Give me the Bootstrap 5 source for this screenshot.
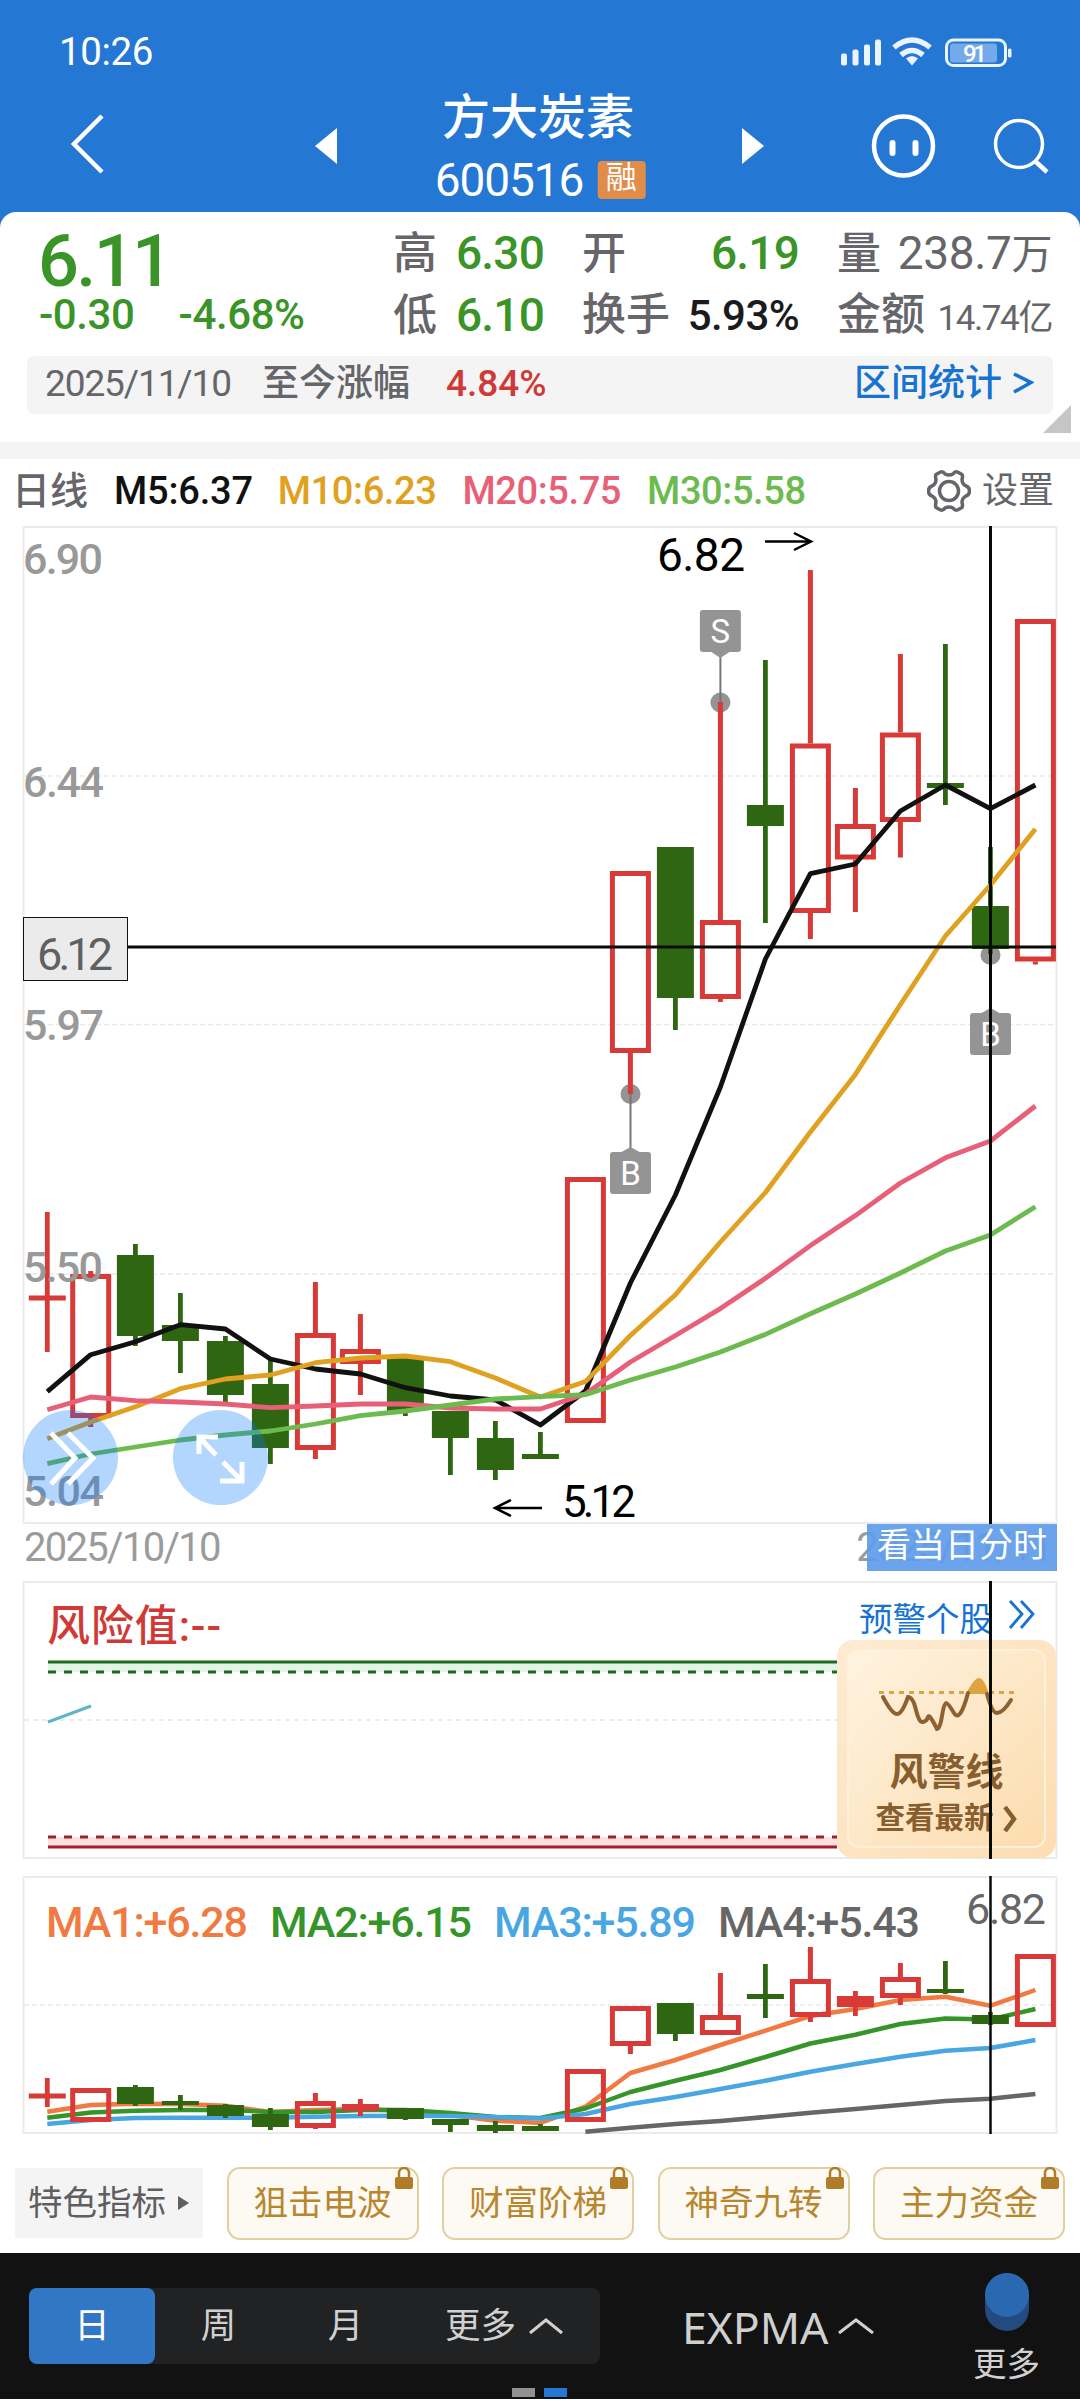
<!DOCTYPE html>
<html lang="zh-CN">
<head>
<meta charset="utf-8">
<meta name="viewport" content="width=1080">
<title>方大炭素 600516</title>
<link href="https://cdn.jsdelivr.net/npm/bootstrap@5.3.0/dist/css/bootstrap.min.css" rel="stylesheet">
<style>
body{width:1080px;height:2400px;overflow:hidden;background:#fff;font-family:Roboto,"Noto Sans CJK SC",sans-serif;line-height:1;color:#66666a}
svg{display:block;flex:none}
.topbar{height:228px;background:#2577d4;color:#fff}
.statusline{height:100px;padding:4px 68px 0 59px;font-size:38.5px}
.titleline{height:112px;position:relative;padding:0 31px 0 70px}
.stock-name{font-size:48px;font-weight:500;line-height:56px;padding-top:4px;height:56px;margin-left:-4px}
.stock-code{font-size:46px;letter-spacing:-1.1px;line-height:44px}
.rong{width:48px;height:38px;background:#e18c49;border-radius:4px;font-size:31px;line-height:34px;text-align:center;margin-left:14px;margin-top:-1px}
.quote-box{height:230px;margin-top:-16px;background:#fff;border-radius:16px 16px 0 0;position:relative;padding:12px 27px 0}
.up{color:#cf3a36}.down{color:#3a9428}.link-blue{color:#1673d2}
.quote-grid{display:grid;grid-template-columns:366px 151px 255px 212px;height:124px}
.price{font-size:72px;font-weight:500;letter-spacing:-2.6px;line-height:72px;height:67px;padding:2px 0 0 11px}
.delta{font-size:42px;font-weight:500;padding-left:12px;line-height:48px;gap:44px;letter-spacing:-.4px}
.pair{display:flex;justify-content:space-between;align-items:baseline;height:62px;line-height:58px;font-size:44px;white-space:nowrap}
.pair>span:first-child{font-weight:500}
.num{font-size:46px;font-weight:500;letter-spacing:-.8px}
.vol{padding-left:38px;margin-right:-41px}
.since{height:58px;background:#f4f4f4;border-radius:7px;font-size:37px;padding:0 19px 4px 18px;margin-top:8px;white-space:nowrap}
.fold{position:absolute;right:9px;bottom:9px}
.strip{height:17px;background:#f3f3f3}
.legend-row{height:67px;padding:0 26px 3px 12px;font-size:38px;font-weight:500;white-space:nowrap}
.date-row{height:57px;position:relative;padding:0 28px 0 24px;font-size:40px;color:#9b9b9d;letter-spacing:-1.7px;line-height:48px}
.intraday{position:absolute;left:867px;top:0;width:190px;height:47px;background:rgba(94,156,236,.92);color:#fff;font-size:34px;line-height:43px;text-align:center;letter-spacing:0}
.overlay-host{position:relative}
.round-btn{position:absolute;top:884px;width:95px;height:95px;border-radius:50%;background:rgba(2,118,252,.3)}
.warn-card{position:absolute;left:837px;top:59px;width:219px;height:218px;border-radius:16px;background:linear-gradient(135deg,#fdebd2,#fdddb2);padding:9px 10px}
.warn-inner{height:199px;border:2px solid #fff0d9;border-radius:12px;background:linear-gradient(135deg,#fff3e1,#fcdcae);color:#895e2f;font-weight:700;text-align:center;padding-top:23px}
.crossline{position:absolute;left:989px;top:0;width:3px;background:#080a08}
.chips{height:119px;padding:33px 15px 0;white-space:nowrap}
.chip-plain{width:188px;height:70px;margin-top:1px;background:#f4f4f4;font-size:34.5px;color:#5f5f61;padding-left:13px;line-height:68px}
.chip-lock{position:relative;width:192px;height:73px;border:2px solid #e2cf9f;border-radius:13px;background:#fdfaf3;color:#b8862f;font-size:34.5px;line-height:68px;text-align:center}
.chip-lock svg{position:absolute;right:4px;top:-2px}
.dock{height:146px;background:#121212;color:#d0d0d0;position:relative;padding:35px 40px 0 29px}
.seg{width:571px;height:76px;background:#212223;border-radius:8px;font-size:35.5px}
.seg>div{height:76px;line-height:76px;text-align:center;width:127px}
.seg>.on{width:126px;background:#3276c6;border-radius:8px;color:#fff}
.pager{position:absolute;left:512px;bottom:2px;gap:9px}
.pager i{width:23px;height:9px;background:#929292}
svg text{font-family:Roboto,"Noto Sans CJK SC",sans-serif}
</style>
<script src="https://cdn.jsdelivr.net/npm/bootstrap@5.3.0/dist/js/bootstrap.bundle.min.js"></script>
</head>
<body>
<header class="topbar">
  <div class="statusline d-flex align-items-center justify-content-between">
    <span style="letter-spacing:-.4px">10:26</span>
    <svg width="171" height="30" viewBox="842 36.500 171 30" fill="#e9f4ff">
      <rect x="842" y="53" width="6" height="12" rx="2"/><rect x="853.500" y="49" width="6" height="16" rx="2"/><rect x="865" y="44" width="6" height="21" rx="2"/><rect x="876" y="39" width="6" height="26" rx="2"/>
      <path d="M913 65l-6-7q6-5 12 0z"/>
      <g fill="none" stroke="#e9f4ff" stroke-width="5.500"><path d="M895 47q18-15 36 0"/><path d="M902 54.500q11-9 22 0"/></g>
      <rect x="947.500" y="39.500" width="59" height="25.500" rx="7" fill="none" stroke="#e9f4ff" stroke-width="3"/>
      <rect x="951" y="43" width="47" height="19" rx="3" fill="#75aaea"/><rect x="1009" y="48" width="3.500" height="9" rx="1.500"/>
      <text x="964" y="61" font-size="24" font-weight="500" textLength="24" fill="#fff">91</text>
    </svg>
  </div>
  <div class="titleline">
    <svg width="980" height="90" viewBox="70 100 980 90" fill="none" stroke="#fff">
      <path d="M102 116L74 144l28 28" stroke-width="4.500"/>
      <path d="M337 128v36l-22-18zM742 128v36l22-18z" fill="#fff" stroke="none"/>
      <circle cx="903.500" cy="146" r="29.500" stroke-width="4.500"/>
      <path d="M892.500 143v10M915.500 143v10" stroke-width="6" stroke-linecap="round"/>
      <circle cx="1019" cy="144" r="23.500" stroke-width="3.500"/><path d="M1035 161l12 11" stroke-width="4.500"/>
    </svg>
    <div class="position-absolute top-0 start-50 translate-middle-x text-center" style="margin-top:-14px">
      <div class="stock-name">方大炭素</div>
      <div class="d-flex align-items-center mt-3"><span class="stock-code">600516</span><span class="rong">融</span></div>
    </div>
  </div>
</header>

<section class="quote-box">
  <div class="quote-grid">
    <div class="down"><div class="price">6.11</div><div class="delta d-flex"><span>-0.30</span><span>-4.68%</span></div></div>
    <div><div class="pair"><span>高</span><span class="num down">6.30</span></div><div class="pair"><span>低</span><span class="num down">6.10</span></div></div>
    <div style="padding-left:38px"><div class="pair"><span>开</span><span class="num down">6.19</span></div><div class="pair"><span>换手</span><span style="color:#1b1b1d;font-size:42px;font-weight:500;letter-spacing:-.6px">5.93%</span></div></div>
    <div><div class="pair vol"><span>量</span><span style="font-size:41px;letter-spacing:-.4px"><span style="font-size:46px">238.7</span>万</span></div><div class="pair vol"><span>金额</span><span style="font-size:35px;letter-spacing:-1.400px">14.74亿</span></div></div>
  </div>
  <div class="since d-flex align-items-center">
    <span style="letter-spacing:-1.100px">2025/11/10</span><span class="fw-medium" style="margin-left:31px">至今涨幅</span><span class="up fw-medium" style="margin-left:36px">4.84%</span>
    <span class="link-blue fw-medium ms-auto">区间统计</span>
    <svg style="margin-left:10px" width="22" height="26" fill="none" stroke="#1673d2" stroke-width="3.500"><path d="M2 4l17 8.500L2 22"/></svg>
  </div>
  <svg class="fold" width="28" height="28"><path d="M28 0v28H0z" fill="#c6c6c6"/></svg>
</section>
<div class="strip"></div>

<div class="legend-row d-flex align-items-center">
  <span>日线</span>
  <span style="color:#111;margin-left:26px;letter-spacing:-.2px">M5:6.37</span>
  <span style="color:#e0a020;margin-left:25px;letter-spacing:-.4px">M10:6.23</span>
  <span style="color:#e85f78;margin-left:26px;letter-spacing:-.4px">M20:5.75</span>
  <span style="color:#6dbb4f;margin-left:26px;letter-spacing:-.4px">M30:5.58</span>
  <svg class="ms-auto" width="44" height="44" viewBox="-22 -22 44 44" fill="none" stroke="#66666a" stroke-width="3.500" stroke-linejoin="round"><path d="M-8.500-19Q-6-20-4-17Q0-15 4-17Q6-20 8.500-19L13-16.500Q14-15 13-11.500Q13-7 17-5Q20.500-4 20.500 0Q20.500 4 17 5Q13 7 13 11.500Q14 15 13 16.500L8.500 19Q6 20 4 17Q0 15-4 17Q-6 20-8.500 19L-13 16.500Q-14 15-13 11.500Q-13 7-17 5Q-20.500 4-20.500 0Q-20.500-4-17-5Q-13-7-13-11.500Q-14-15-13-16.500z"/><circle r="9.500"/></svg>
  <span style="font-size:36px;font-weight:400;margin-left:11px">设置</span>
</div>

<div class="overlay-host">
  <svg id="kline" width="1080" height="998" viewBox="0 526 1080 998"></svg>
  <div class="round-btn" style="left:23px"><svg width="95" height="95" fill="none" stroke="#fff" stroke-width="5"><path d="M28 23L52 48 28 74M45 23L70 48 45 74"/></svg></div>
  <div class="round-btn" style="left:173px"><svg width="95" height="95" fill="none" stroke="#fff" stroke-width="5"><path d="M45 27H26V44M26 27L43 45M50 52L69 71M47 71H69V52"/></svg></div>
</div>
<div class="date-row d-flex justify-content-between"><span>2025/10/10</span><span>2025/11/11</span><span class="intraday">看当日分时</span></div>

<div class="overlay-host" style="height:295px">
  <svg width="1080" height="278" viewBox="0 1581 1080 278">
    <rect x="23.500" y="1582" width="1033" height="276" fill="none" stroke="#ebebeb" stroke-width="2"/>
    <path d="M24 1720H837" stroke="#e6e6e6" stroke-width="1.500" stroke-dasharray="5 4"/>
    <path fill="#e3f3e5" d="M48 1662h789v10H48z"/><path fill="#fcdfe0" d="M48 1837h789v10H48z"/>
    <g fill="none" stroke-width="3"><path d="M48 1662H837" stroke="#1d6b20"/><path d="M48 1672H837" stroke="#1d6b20" stroke-dasharray="8 8"/><path d="M48 1837H837" stroke="#a51d28" stroke-dasharray="8 8"/><path d="M48 1847H837" stroke="#a51d28"/></g>
    <path d="M48 1722L91 1706" stroke="#62b5c9" stroke-width="3"/>
    <text x="47" y="1641" font-size="43" font-weight="500" fill="#cf3a36" textLength="174">风险值:--</text>
    <text x="859" y="1631" font-size="33.500" fill="#1673d2">预警个股</text>
    <path d="M1010 1601l12 13-12 14M1021 1601l12 13-12 14" fill="none" stroke="#1673d2" stroke-width="2.800"/>
  </svg>
  <div class="warn-card"><div class="warn-inner">
    <svg class="mx-auto" width="140" height="60" viewBox="877 1674 140 60" fill="none">
      <path d="M966 1694q8-16 13-16t10 16z" fill="#dfa440"/><path d="M879 1692.500H1015" stroke="#dfa440" stroke-width="3" stroke-dasharray="5 5"/>
      <path d="M883 1697q9 17 14 17t11-17q5 0 8 13t7 12 5-5 9 12q3 0 5-13t4-13 8 10 14-20M987 1694q5 19 10 19 6 0 14-13" stroke="#8d6230" stroke-width="4" stroke-linecap="round"/>
    </svg>
    <div style="font-size:38px;line-height:42px;margin-top:17px">风警线</div>
    <div class="d-flex justify-content-center align-items-center" style="font-size:29.500px;line-height:40px;margin-top:5px">查看最新<svg style="margin-left:8px" width="16" height="28" fill="none" stroke="#895e2f" stroke-width="4.500"><path d="M3 3l9 12-9 12"/></svg></div>
  </div></div>
  <div class="crossline" style="height:278px"></div>
</div>

<svg id="expma" width="1080" height="258" viewBox="0 1876 1080 258"></svg>

<div class="chips d-flex justify-content-between">
  <div class="chip-plain d-flex align-items-center"><span>特色指标</span><svg width="11" height="14" style="margin-left:12px" fill="#5f5f61"><path d="M0 0l11 7-11 7z"/></svg></div>
  <div class="chip-lock">狙击电波<svg width="18" height="23"><path d="M4 11V6a5 5 0 0 1 10 0v5" fill="none" stroke="#b17c27" stroke-width="2.500"/><rect y="10" width="18" height="12" rx="2" fill="#b17c27"/></svg></div>
  <div class="chip-lock">财富阶梯<svg width="18" height="23"><path d="M4 11V6a5 5 0 0 1 10 0v5" fill="none" stroke="#b17c27" stroke-width="2.500"/><rect y="10" width="18" height="12" rx="2" fill="#b17c27"/></svg></div>
  <div class="chip-lock">神奇九转<svg width="18" height="23"><path d="M4 11V6a5 5 0 0 1 10 0v5" fill="none" stroke="#b17c27" stroke-width="2.500"/><rect y="10" width="18" height="12" rx="2" fill="#b17c27"/></svg></div>
  <div class="chip-lock">主力资金<svg width="18" height="23"><path d="M4 11V6a5 5 0 0 1 10 0v5" fill="none" stroke="#b17c27" stroke-width="2.500"/><rect y="10" width="18" height="12" rx="2" fill="#b17c27"/></svg></div>
</div>

<nav class="dock d-flex">
  <div class="seg d-flex"><div class="on">日</div><div>周</div><div>月</div>
    <div class="d-flex align-items-center justify-content-center" style="width:191px;padding-right:0">更多<svg style="margin-left:12px" width="36" height="18" fill="none" stroke="#d0d0d0" stroke-width="3"><path d="M2 16L18 3l16 13"/></svg></div></div>
  <div class="d-flex align-items-center" style="height:76px;margin-left:82px;font:44.500px 'Noto Sans',sans-serif">EXPMA<svg style="margin-left:8px" width="38" height="18" fill="none" stroke="#d0d0d0" stroke-width="3"><path d="M2 16L19 3l17 13"/></svg></div>
  <div class="ms-auto text-center" style="margin-top:-15px;font-size:33.500px">
    <svg class="mx-auto" width="44" height="58"><path d="M0 22a22 22 0 0 1 44 0v14a22 22 0 0 1-44 0z" fill="#234b7f"/><circle cx="22" cy="22" r="22" fill="#2b68b2"/></svg>
    <div style="margin-top:17px">更多</div>
  </div>
  <div class="pager d-flex"><i></i><i style="background:#2577d4"></i></div>
</nav>

<script>
const RED='#d83a38', GREEN='#2f6612';
const cx=i=>i===0?47.3:i===1?90.7:45.4+45*i;
/* [up?, body top, body bottom, wick top, wick bottom] in panel coordinates */
const day=[[1,1295.5,1300.5,1212,1352],[1,1274,1418,1271,1427],[0,1255,1336,1244,1346],[0,1325,1341,1293,1373],[0,1341,1395,1336,1402],[0,1384,1448,1360,1464],[1,1333,1450,1282,1459],[1,1349,1364,1314,1395],[0,1357,1411,1357,1416],[0,1411,1438,1411,1475],[0,1438,1470,1421,1480],[0,1454,1459,1432,1459],[1,1177,1423,1177,1423],[1,871,1053,871,1094],[0,847,998,847,1030],[1,920,999,702,1002],[0,805,826,660,923],[1,743.5,913,570,939],[1,824,859.5,788,912],[1,732.5,822,654,857.5],[0,783,788,644,805],[0,906,949,847,954],[1,619,961.5,619,964.5]];
const mini=[[1,2093.5,2098.5,2078,2107],[1,2088,2122,2088,2122],[0,2087,2104,2085,2106],[0,2101,2105,2095,2110],[0,2105,2116,2104,2118],[0,2114,2127,2108,2130],[1,2101,2128,2093,2129],[1,2104,2111,2099,2116],[0,2108,2119,2108,2120],[0,2119,2125,2119,2132],[0,2125,2131,2121,2133],[0,2126,2131,2124,2131],[1,2069,2122,2069,2122],[1,2006,2046,2006,2054],[0,2003,2034,2003,2041],[1,2015,2035,1973,2035],[0,1994,1999,1964,2018],[1,1979,2017,1947,2022],[1,1996,2007,1991,2016],[1,1977,1998,1963,2005],[0,1989,1993,1961,1994],[0,2015,2024,2012,2025],[1,1954,2027,1954,2027]];
const candle=([up,t,b,wt,wb],i)=>{
  const x=cx(i), c=up?RED:GREEN;
  if(up && b-t>14) return `<g stroke="${c}" stroke-width="5" fill="none"><rect x="${x-18}" y="${t+2.5}" width="36" height="${b-t-5}"/><path d="M${x} ${wt}V${t}M${x} ${b}V${wb}"/></g>`;
  return `<path fill="${c}" d="M${x-18.5} ${t}h37V${b}h-37z"/><path stroke="${c}" stroke-width="4.800" d="M${x} ${wt}V${wb}"/>`;
};
const line=(v,c,w,s=0)=>`<polyline fill="none" stroke="${c}" stroke-width="${w}" stroke-linejoin="round" points="${v.map((y,i)=>cx(i+s)+','+y).join(' ')}"/>`;
const grid=y=>`<path d="M24 ${y}H1056" stroke="#e9e9e9" stroke-width="1.500" stroke-dasharray="5 3"/>`;
const label=(x,y,s,n,w,c,fw=400)=>`<text x="${x}" y="${y}" font-size="${n}" textLength="${w}" fill="${c}" font-weight="${fw}">${s}</text>`;
const tag=(x,top,ch,down)=>`<rect x="${x-20.5}" y="${top}" width="41" height="42" rx="3" fill="#949494"/><path fill="#949494" d="${down?`M${x-9} ${top+42}h18l-9 6z`:`M${x-9} ${top}h18l-9-5z`}"/><text x="${x}" y="${top+32.5}" font-size="33" fill="#fff" text-anchor="middle">${ch}</text>`;
const g='#999';
document.getElementById('kline').innerHTML=
 `<rect x="23.500" y="527" width="1033" height="996" fill="none" stroke="#ebebeb" stroke-width="2"/>`+
 grid(776)+grid(1024.5)+grid(1274)+
 `<g fill="#949494"><circle cx="720.400" cy="702.500" r="10"/><circle cx="630.500" cy="1094" r="10"/><circle cx="990.500" cy="955" r="10"/></g>`+
 `<path d="M720.400 655V702M630.500 1094V1150" stroke="#777" stroke-width="2"/>`+
 tag(720.4,610,'S',1)+tag(630.5,1152,'B',0)+tag(990.5,1013,'B',0)+
 day.map(candle).join('')+
 label(23,574,'6.90',43,80,g,500)+label(23,797,'6.44',43,81,g,500)+label(23,1040,'5.97',43,81,g,500)+label(23,1282,'5.50',43,80,g,500)+label(23,1506,'5.04',43,81,g,500)+
 line([1391.7,1354.7,1341.7,1324.7,1329,1359,1369,1374,1387.7,1396,1400,1425,1391,1283,1195,1087,959,873.6,864,811,785,808.6,785],'#111',4.8)+
 line([1438.7,1422,1406.7,1388.7,1379,1375,1362.7,1358,1356,1361.7,1378,1397,1381.6,1335.5,1294.8,1242,1192.5,1132,1074.4,1004.5,936,885,829],'#e0a020',4.8)+
 line([1409.7,1397,1400.7,1402,1404,1407.7,1406,1404,1404,1408,1409,1409,1394,1362,1335.5,1308.6,1278.3,1245.6,1215.6,1183,1157.8,1141,1106],'#e85f78',4.8)+
 line([1463.7,1454,1447,1440,1435,1431,1424,1415.7,1411,1405,1399,1396.7,1394.7,1380,1367,1352,1334.4,1313.8,1294,1273,1251,1235,1206.7],'#6dbb4f',4.8)+
 `<path d="M990.500 526V1524M128 947H1056" stroke="#080a08" stroke-width="3" fill="none"/>`+
 `<rect x="23.500" y="917.500" width="104" height="63" fill="#ebebeb" stroke="#111"/>`+label(37,970,'6.12',45,76,'#606060')+
 label(657,571,'6.82',46,88,'#000')+label(562,1517,'5.12',44,74,'#000')+
 `<path d="M765 541.500H810M794 533l17 8.500-17 8.500M542 1508H496M511 1500l-16 8 16 8" stroke="#000" stroke-width="2.500" fill="none"/>`;
document.getElementById('expma').innerHTML=
 `<rect x="23.500" y="1877" width="1033" height="256" fill="none" stroke="#ebebeb" stroke-width="2"/>`+grid(2005)+
 line([2111.7,2105,2103.7,2104,2105.7,2112,2110,2109,2110.7,2115,2120.7,2123,2106.7,2073,2060,2045,2030.7,2016,2009,2000,1996.7,2005.7,1990],'#f07a42',4.5)+
 line([2117.7,2112.5,2110.7,2110,2110,2112,2112,2110,2110,2113,2117,2118,2108.5,2092,2080.7,2070,2057,2043.5,2034.7,2024,2018.5,2019.5,2009],'#36952a',4.5)+
 line([2124,2120,2118,2117.7,2117.7,2117.7,2116.7,2116,2115.7,2116,2117,2118.5,2114,2104,2097,2089,2080.7,2071.7,2064,2056.7,2050.7,2048,2040],'#48a6e2',4.5)+
 line([2131.7,2127.7,2124,2121,2117,2112.7,2109,2105,2101,2098.7,2094],'#666',4.5,12)+
 mini.map(candle).join('')+
 label(46,1937,'MA1:+6.28',43,202,'#f07a42',500)+label(270,1937,'MA2:+6.15',43,202,'#36952a',500)+label(494,1937,'MA3:+5.89',43,202,'#48a6e2',500)+label(718,1937,'MA4:+5.43',43,202,'#666',500)+
 label(966,1924,'6.82',43,80,'#666')+
 `<path d="M990.500 1876V2134" stroke="#080a08" stroke-width="2.500"/>`;
</script>
</body>
</html>
